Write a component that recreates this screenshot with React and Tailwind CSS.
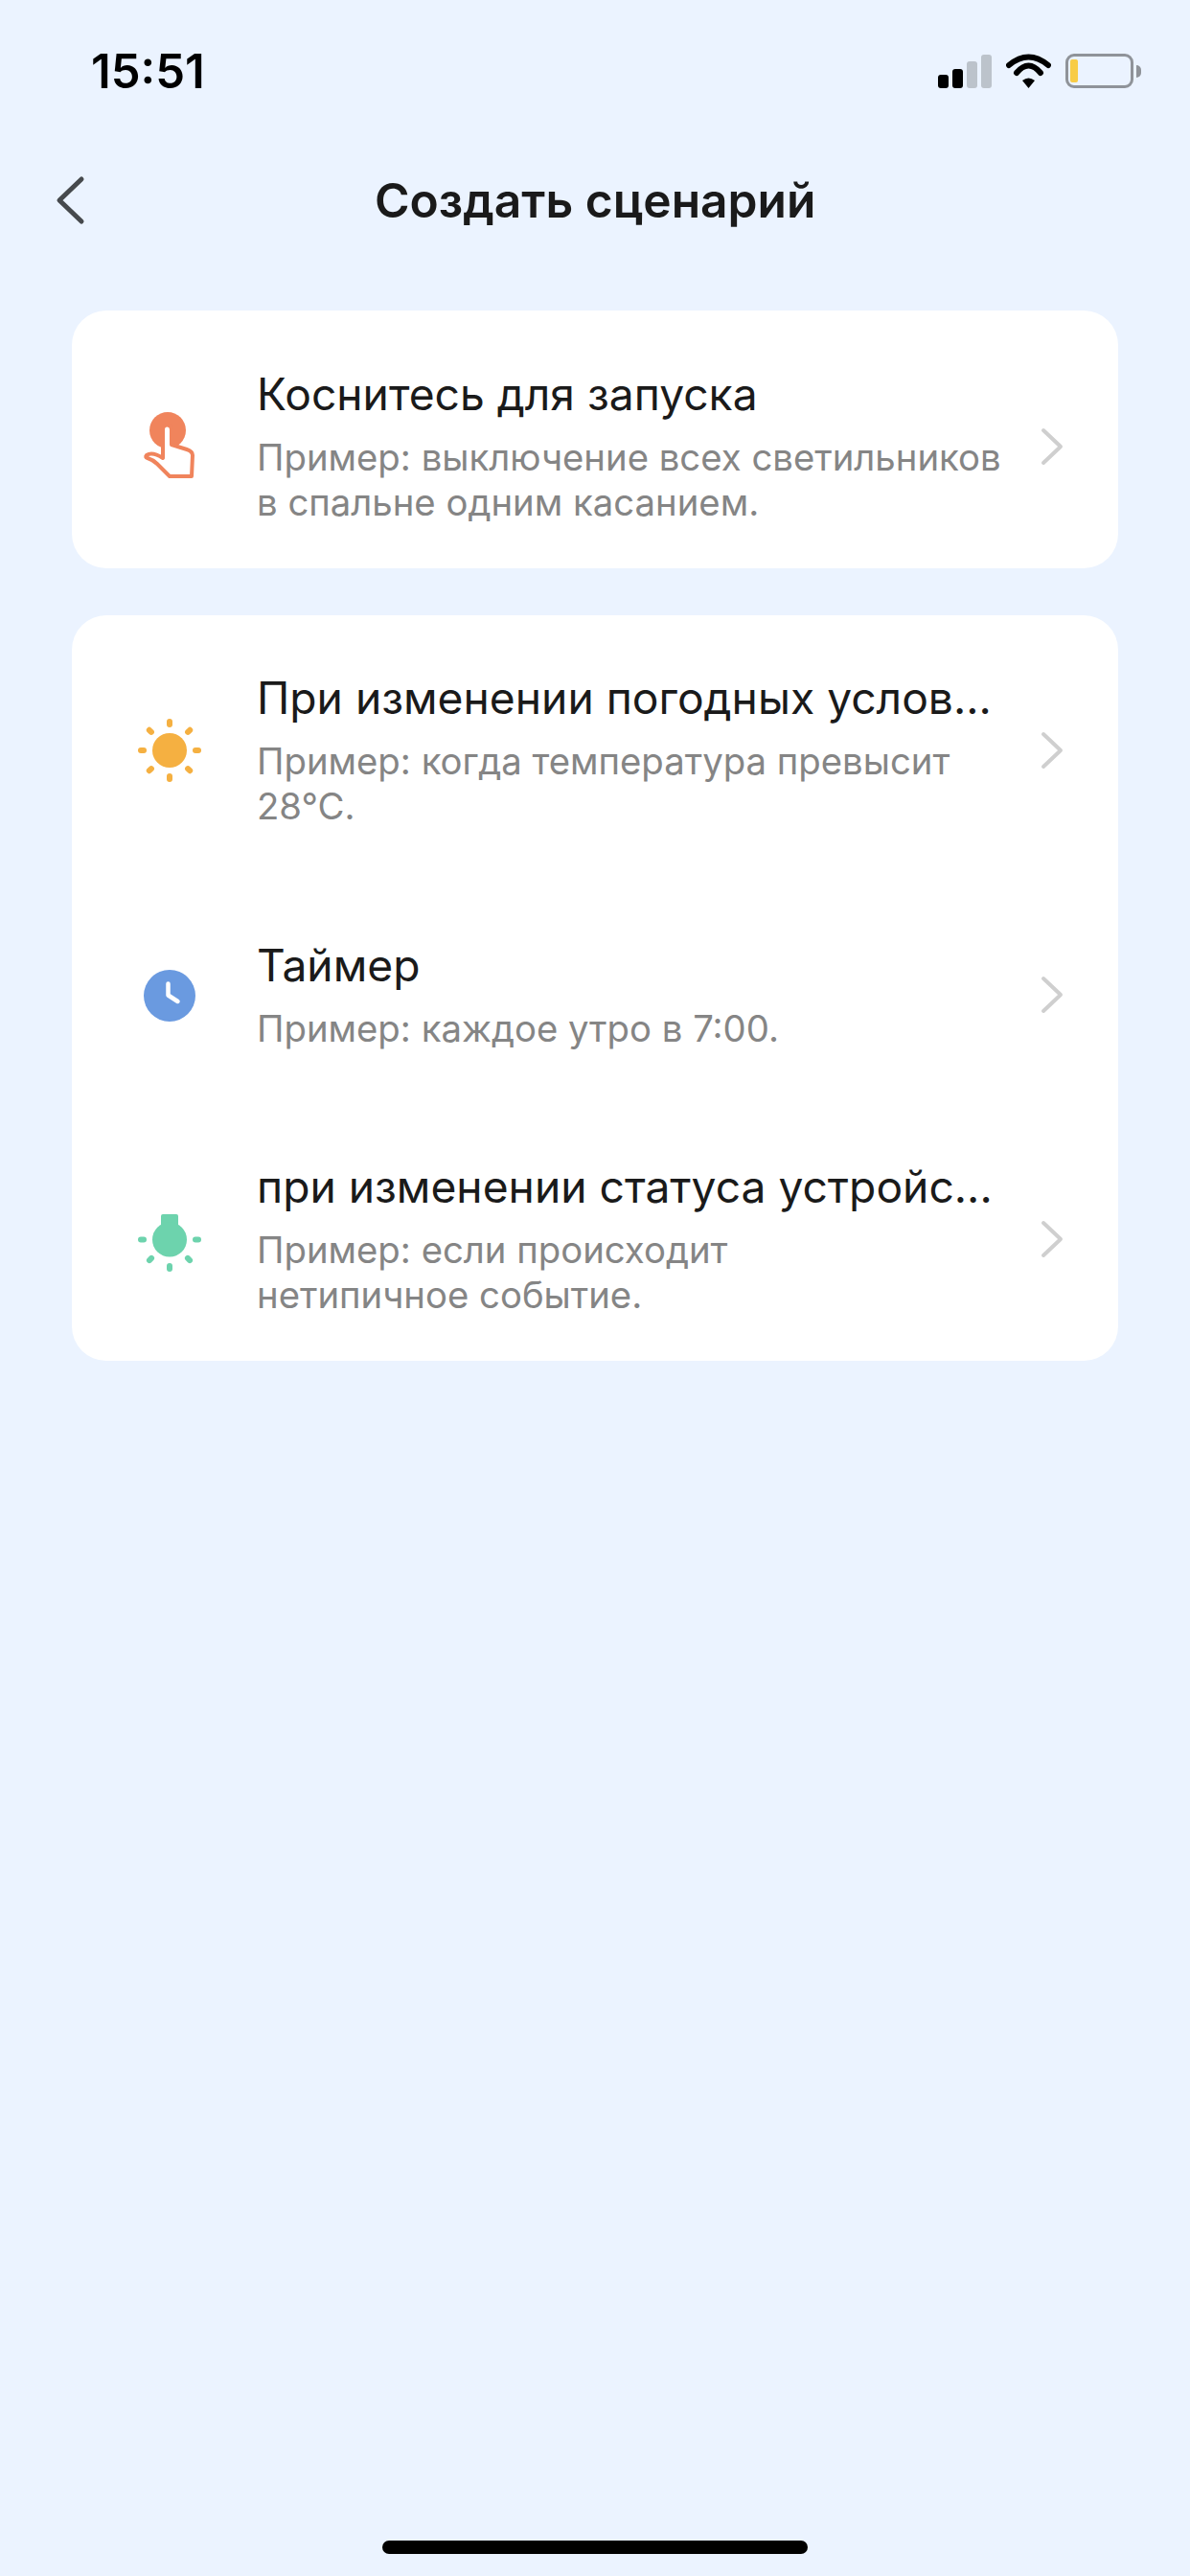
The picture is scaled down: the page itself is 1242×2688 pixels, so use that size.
const rows = {
  tap: { title: 'Коснитесь для запуска', sub: ['Пример: выключение всех светильников', 'в спальне одним касанием.'] },
  weather: { title: 'При изменении погодных услов...', sub: ['Пример: когда температура превысит', '28°C.'] },
  timer: { title: 'Таймер', sub: ['Пример: каждое утро в 7:00.'] },
  device: { title: 'при изменении статуса устройс...', sub: ['Пример: если происходит', 'нетипичное событие.'] },
}

function TapIcon() {
  return (
    <svg width="80" height="80" viewBox="0 0 80 80" className="shrink-0">
      <circle cx="38" cy="23" r="19" fill="#f0845c" />
      <path
        d="M33 52V22a4.500 4.500 0 0 1 9 0V38l16 5q6 2 6 6l-1 22H40L27 58q-4-4-10-6q-3-1-1-3q6-4 17 3z"
        fill="#fff"
        stroke="#f0845c"
        strokeWidth="4"
        strokeLinejoin="round"
      />
    </svg>
  )
}

function SunIcon() {
  const angles = [0, 45, 90, 135, 180, 225, 270, 315]
  return (
    <svg width="80" height="80" viewBox="0 0 80 80" className="shrink-0">
      <circle cx="40" cy="40" r="18" fill="#f5b041" />
      {angles.map((a) => (
        <rect key={a} x="37" y="7" width="6" height="9" rx="3" fill="#f5b041" transform={`rotate(${a} 40 40)`} />
      ))}
    </svg>
  )
}

function ClockIcon() {
  return (
    <svg width="80" height="80" viewBox="0 0 80 80" className="shrink-0">
      <circle cx="40" cy="41" r="27" fill="#6a9ae0" />
      <path d="M38.500 28.500V40.500l10 6.500" fill="none" stroke="#fff" strokeWidth="4.500" strokeLinecap="round" strokeLinejoin="round" />
    </svg>
  )
}

function BulbIcon() {
  return (
    <svg width="80" height="80" viewBox="0 0 80 80" className="shrink-0">
      <path d="M31 16a2 2 0 0 1 2-2h14a2 2 0 0 1 2 2v14H31z" fill="#6dd3ad" />
      <circle cx="40" cy="40.500" r="18" fill="#6dd3ad" />
      <rect x="7" y="37.500" width="9" height="6" rx="3" fill="#6dd3ad" />
      <rect x="64" y="37.500" width="9" height="6" rx="3" fill="#6dd3ad" />
      <rect x="37" y="65" width="6" height="9" rx="3" fill="#6dd3ad" />
      <rect x="17" y="56.500" width="6" height="9" rx="3" fill="#6dd3ad" transform="rotate(45 20 61)" />
      <rect x="57" y="56.500" width="6" height="9" rx="3" fill="#6dd3ad" transform="rotate(-45 60 61)" />
    </svg>
  )
}

function Chevron() {
  return (
    <svg width="28" height="42" viewBox="0 0 28 42" className="shrink-0">
      <path d="M4 4l18 17L4 38" fill="none" stroke="#cfcfcf" strokeWidth="4" strokeLinecap="round" strokeLinejoin="round" />
    </svg>
  )
}

function Row({ icon, data }) {
  return (
    <div className="flex h-[255px] items-center pl-[62px] pr-[54px]">
      {icon}
      <div className="ml-[51px] w-[790px] min-w-0 pb-[2px]">
        <div className="text-[46.200px] leading-[60px] text-[#1a1a1a]">{data.title}</div>
        <div className="mt-[13px] text-[38.300px] leading-[47px] text-[#858585]">
          {data.sub.map((line) => (
            <div key={line} className="whitespace-nowrap">{line}</div>
          ))}
        </div>
      </div>
      <div className="ml-auto">
        <Chevron />
      </div>
    </div>
  )
}

function StatusBar() {
  return (
    <div className="flex h-[150px] items-start justify-between pl-[95px] pr-[51px]">
      <span className="mt-[45px] text-[49px] font-semibold leading-[60px] text-black">15:51</span>
      <div className="mt-[56px] flex items-start">
        <svg width="56" height="35" viewBox="0 0 56 35" className="mt-[1px]">
          <rect x="0" y="21" width="11" height="14" rx="3" fill="#000" />
          <rect x="15" y="15" width="11" height="20" rx="3" fill="#000" />
          <rect x="30" y="7" width="11" height="28" rx="3" fill="#bcc3cb" />
          <rect x="45" y="0" width="11" height="35" rx="3" fill="#bcc3cb" />
        </svg>
        <svg width="47" height="36" viewBox="0 0 47 36" className="ml-[15px]">
          <path d="M3 12Q23.500-5 44 12" fill="none" stroke="#000" strokeWidth="6" strokeLinecap="round" />
          <path d="M11 20Q23.500 5 36 20" fill="none" stroke="#000" strokeWidth="6" strokeLinecap="round" />
          <path d="M17 28Q23.500 23 30 28L23.500 36z" fill="#000" />
        </svg>
        <div className="ml-[15px] flex items-center">
          <div className="h-[36px] w-[71px] rounded-[9px] border-[3px] border-[#8f9399] px-[2px] py-[3px]">
            <div className="h-full w-[8px] rounded-[2px] bg-[#f8cc46]" />
          </div>
          <div className="ml-[3px] h-[13px] w-[5px] rounded-r-full bg-[#8f9399]" />
        </div>
      </div>
    </div>
  )
}

export default function App() {
  return (
    <div
      className="relative h-[2688px] w-[1242px] overflow-hidden bg-[#ebf3ff]"
      style={{ fontFamily: 'Inter, "Noto Sans", sans-serif' }}
    >
      <StatusBar />

      <div className="flex h-[118px] items-center pl-[56px]">
        <svg width="36" height="54" viewBox="0 0 36 54">
          <path d="M29 5L6 27l23 22" fill="none" stroke="#46494d" strokeWidth="5" strokeLinecap="round" strokeLinejoin="round" />
        </svg>
        <h1 className="ml-[299px] text-[49.700px] font-semibold leading-[60px] text-[#1a1a1a]">Создать сценарий</h1>
      </div>

      <div className="mt-[56px] flex flex-col gap-[49px] px-[75px]">
        <div className="rounded-[36px] bg-white pt-[14px]">
          <Row icon={<TapIcon />} data={rows.tap} />
        </div>
        <div className="rounded-[36px] bg-white pt-[13px]">
          <Row icon={<SunIcon />} data={rows.weather} />
          <Row icon={<ClockIcon />} data={rows.timer} />
          <Row icon={<BulbIcon />} data={rows.device} />
        </div>
      </div>

      <div className="absolute bottom-[23px] left-[399px] h-[14px] w-[444px] rounded-full bg-black" />
    </div>
  )
}
